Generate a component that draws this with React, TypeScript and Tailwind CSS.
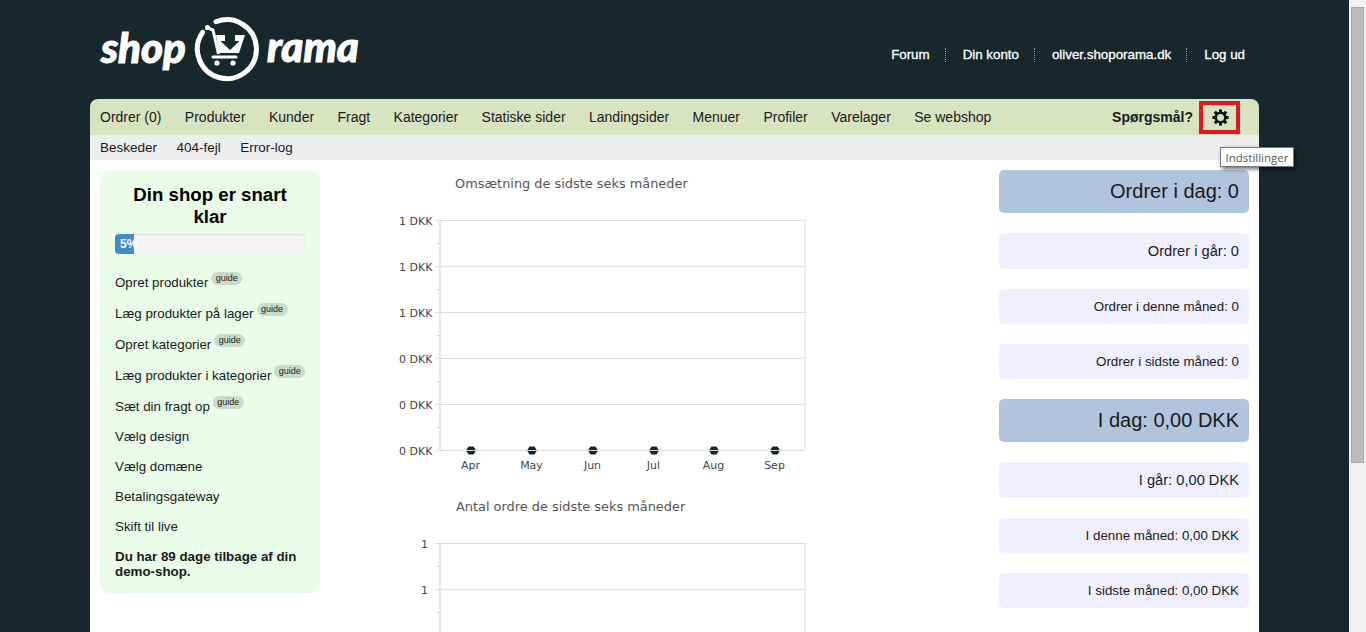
const mainNav = ["Ordrer (0)", "Produkter", "Kunder", "Fragt", "Kategorier", "Statiske sider", "Landingsider", "Menuer", "Profiler", "Varelager", "Se webshop"];
const subNav = ["Beskeder", "404-fejl", "Error-log"];
const topLinks = ["Forum", "Din konto", "oliver.shoporama.dk", "Log ud"];

const steps = [
  { label: "Opret produkter", guide: true },
  { label: "Læg produkter på lager", guide: true },
  { label: "Opret kategorier", guide: true },
  { label: "Læg produkter i kategorier", guide: true },
  { label: "Sæt din fragt op", guide: true },
  { label: "Vælg design" },
  { label: "Vælg domæne" },
  { label: "Betalingsgateway" },
  { label: "Skift til live" },
];

const stats = [
  { text: "Ordrer i dag: 0", size: "big" },
  { text: "Ordrer i går: 0", size: "mid" },
  { text: "Ordrer i denne måned: 0", size: "small" },
  { text: "Ordrer i sidste måned: 0", size: "small" },
  { text: "I dag: 0,00 DKK", size: "big" },
  { text: "I går: 0,00 DKK", size: "mid" },
  { text: "I denne måned: 0,00 DKK", size: "small" },
  { text: "I sidste måned: 0,00 DKK", size: "small" },
];

const months = [
  { name: "Apr", x: 471 },
  { name: "May", x: 532 },
  { name: "Jun", x: 593 },
  { name: "Jul", x: 654 },
  { name: "Aug", x: 714 },
  { name: "Sep", x: 775 },
];

const Logo = () => (
  <svg width="80" height="80" viewBox="0 0 80 80" fill="none" className="shrink-0">
    <path d="M35 11.7A29.5 29.5 0 1 1 21.6 22.4" stroke="#fff" strokeWidth="5" strokeLinecap="round" />
    <circle cx="26.5" cy="17.5" r="2.6" fill="#fff" />
    <path d="M27 18L32 20L37.5 44" stroke="#fff" strokeWidth="3" strokeLinejoin="round" />
    <path d="M35 25H64L58 43H38Z" fill="#fff" />
    <path d="M44 25H54V31H58.5L49 40L39.5 31H44Z" fill="#17282c" />
    <path d="M32 47H55" stroke="#fff" strokeWidth="3" strokeLinecap="round" />
    <circle cx="36" cy="53" r="2.6" fill="#fff" />
    <circle cx="52" cy="53" r="2.6" fill="#fff" />
  </svg>
);

const Gear = () => (
  <svg width="17" height="17" viewBox="0 0 17 17" fill="none" className="ml-[2px]">
    <circle cx="8.5" cy="8.5" r="4.8" stroke="#111" strokeWidth="2.6" />
    {[0, 45, 90, 135, 180, 225, 270, 315].map((a) => (
      <rect key={a} x="7" y="0.4" width="3" height="3" fill="#111" transform={`rotate(${a} 8.5 8.5)`} />
    ))}
  </svg>
);

const Charts = () => {
  const line = "#dcdcdc";
  const axis = "#cfcfcf";
  const txt = "#444";
  const font = "'DejaVu Sans', sans-serif";
  const first = [220, 266, 312, 358, 404, 450];
  const firstLabels = ["1 DKK", "1 DKK", "1 DKK", "0 DKK", "0 DKK", "0 DKK"];
  return (
    <svg width="660" height="462" viewBox="330 170 660 462" className="block">
      <text x="455" y="188" fontSize="12.9" fill="#555" fontFamily={font}>Omsætning de sidste seks måneder</text>
      <path d="M805 220V450" stroke={line} />
      <path d="M440 220V450" stroke={axis} />
      {first.map((y, i) => (
        <g key={y}>
          <path d={`M435 ${y + 0.5}H805`} stroke={line} />
          {i < 5 && <path d={`M437 ${y + 23.5}H440`} stroke={axis} />}
          <text x="432.5" y={y + 5} fontSize="11" textAnchor="end" fill={txt} fontFamily={font}>{firstLabels[i]}</text>
        </g>
      ))}
      {months.map((m) => (
        <g key={m.name}>
          <path
            d={`M${m.x - 5} 450.5L${m.x - 2.5} 446.5H${m.x + 2.5}L${m.x + 5} 450.5L${m.x + 2.5} 454.5H${m.x - 2.5}Z`}
            fill="#17282c"
          />
          <path d={`M${m.x - 6} 450.5H${m.x + 6}`} stroke="#d5d5d5" />
          <text x={m.x - 0.5} y="469" fontSize="11" textAnchor="middle" fill={txt} fontFamily={font}>{m.name}</text>
        </g>
      ))}

      <text x="456" y="511" fontSize="12.9" fill="#555" fontFamily={font}>Antal ordre de sidste seks måneder</text>
      <path d="M805 543V632" stroke={line} />
      <path d="M440 543V632" stroke={axis} />
      {[543, 589].map((y) => (
        <g key={y}>
          <path d={`M435 ${y + 0.5}H805`} stroke={line} />
          <path d={`M437 ${y + 23.5}H440`} stroke={axis} />
          <text x="428" y={y + 5} fontSize="11" textAnchor="end" fill={txt} fontFamily={font}>1</text>
        </g>
      ))}
    </svg>
  );
};

export default function App() {
  return (
    <div className="flex h-[632px] w-[1366px] overflow-hidden bg-[#17282c] font-['Liberation_Sans',Arial,sans-serif] text-[14px] text-[#1a1a1a]">
      <div className="w-[1349px] pl-[90px]">
        <div className="flex h-[99px] w-[1169px] items-start justify-between">
          {/* logo */}
          <div className="ml-[11px] mt-[7px] flex h-[80px] items-center font-['Lato',sans-serif] text-[42px] font-black italic leading-none text-white [-webkit-text-stroke:1px_white]">
            <span className="w-[85px]">shop</span>
            <span className="-ml-[5px] mt-[6px]">
              <Logo />
            </span>
            <span className="ml-[6px] -mt-[3px]">rama</span>
          </div>
          <div className="mr-[14px] mt-[47px] flex h-[16px] items-center text-[13.33px] text-white [-webkit-text-stroke:0.3px_white]">
            {topLinks.map((l, i) => (
              <span
                key={l}
                className={i === 0 ? "pr-[15px] leading-none" : "border-l border-dotted border-[#8a9a9a] pl-[17px] pr-[15px] leading-none last:pr-0"}
              >
                {l}
              </span>
            ))}
          </div>
        </div>

        <div className="relative w-[1169px]">
          <nav className="flex h-[36px] items-center justify-between rounded-t-[8px] bg-[#d8e3c0] pl-[10px] pr-[19px]">
            <div className="flex gap-[23.4px]">
              {mainNav.map((n) => (
                <span key={n}>{n}</span>
              ))}
            </div>
            <div className="flex items-center gap-[6px]">
              <span className="font-bold">Spørgsmål?</span>
              <span className="flex h-[33px] w-[41px] items-center justify-center border-[4px] border-[#e8141f]">
                <Gear />
              </span>
            </div>
          </nav>
          <div className="flex h-[25px] items-center gap-[19.5px] bg-[#eeeeee] pl-[10px] pt-[1px] text-[13.5px]">
            {subNav.map((n) => (
              <span key={n}>{n}</span>
            ))}
          </div>
          {/* tooltip */}
          <div className="absolute left-[1130px] top-[48px] border border-[#777] bg-white px-[4.5px] py-[2.5px] font-['Open_Sans',sans-serif] text-[11.5px] leading-[13px] text-[#555] shadow-[2px_2px_4px_rgba(0,0,0,0.6)]">
            Indstillinger
          </div>

          <div className="flex h-[472px] bg-white pt-[10px]">
            <aside className="ml-[10px] h-[424px] w-[220px] shrink-0 rounded-[10px] bg-[#e9fde9] px-[15px] pt-[14px] text-[13.33px]">
              <h2 className="text-center text-[18.67px] font-bold leading-[22px] text-black">Din shop er snart klar</h2>
              <div className="mt-[6px] flex h-[20px] overflow-hidden rounded-[4px] bg-[#f5f5f5] shadow-[inset_0_1px_2px_rgba(0,0,0,0.1)]">
                <div className="flex w-[19px] items-center whitespace-nowrap bg-[#428bca] pl-[5px] text-[12px] font-bold text-white">5%</div>
              </div>
              <ul className="mt-[13px]">
                {steps.map((s) => (
                  <li key={s.label} className={s.guide ? "flex h-[31px] items-center whitespace-nowrap" : "flex h-[30px] items-center whitespace-nowrap"}>
                    <span>{s.label}</span>
                    {s.guide && (
                      <span className="mb-[8px] ml-[3px] rounded-full bg-[#c9dcc9] px-[4.5px] text-[9px] leading-[13px] text-[#222]">guide</span>
                    )}
                  </li>
                ))}
              </ul>
              <p className="mt-[7px] font-bold leading-[15px]">Du har 89 dage tilbage af din demo-shop.</p>
            </aside>

            <div className="ml-[10px] w-[660px] shrink-0">
              <Charts />
            </div>

            <div className="ml-[9px] w-[250px] shrink-0">
              {stats.map((s) => (
                <div
                  key={s.text}
                  className={
                    s.size === "big"
                      ? "mb-[20px] flex h-[43px] items-center justify-end rounded-[5px] bg-[#b0c4de] pb-[2px] pr-[10px] text-[20px]"
                      : s.size === "mid"
                        ? "mb-[20px] flex h-[36px] items-center justify-end rounded-[5px] bg-[#efefff] pr-[10px] text-[14.67px]"
                        : "mb-[20px] flex h-[35px] items-center justify-end rounded-[5px] bg-[#efefff] pr-[10px] text-[13.33px]"
                  }
                >
                  {s.text}
                </div>
              ))}
            </div>
          </div>
        </div>
      </div>

      {/* scrollbar */}
      <div className="h-full w-[17px] bg-[#f1f1f1] pl-[2px] pt-[7px]">
        <div className="h-[456px] w-[13px] border border-[#a8a8a8] bg-[#bcbcbc]" />
      </div>
    </div>
  );
}
